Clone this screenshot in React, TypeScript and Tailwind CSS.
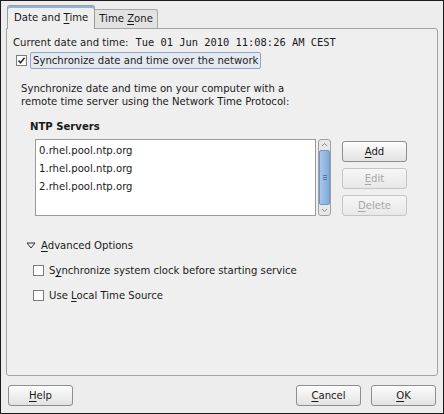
import { ReactNode } from "react";

const U = ({ children }: { children: ReactNode }) => (
  <span className="underline underline-offset-2">{children}</span>
);

const GtkButton = ({
  children,
  disabled = false,
  className = "",
}: {
  children: ReactNode;
  disabled?: boolean;
  className?: string;
}) => (
  <div
    className={`flex items-center justify-center h-[21px] w-[65px] rounded-[3px] border ${
      disabled
        ? "border-[#c4c4c4] text-[#a8a8a8] bg-gradient-to-b from-[#f6f6f6] to-[#e8e8e8]"
        : "border-[#8e8e8e] text-[#1a1a1a] bg-gradient-to-b from-[#fdfdfd] to-[#e2e2e2]"
    } ${className}`}
  >
    <span>{children}</span>
  </div>
);

const CheckBox = ({ checked = false }: { checked?: boolean }) => (
  <div className="w-[11px] h-[11px] border border-[#7c7c7c] bg-white flex items-center justify-center shrink-0">
    {checked && (
      <svg width="9" height="9" viewBox="0 0 9 9">
        <path d="M1.5 4.5 L3.5 6.8 L7.5 1.8" fill="none" stroke="#222" strokeWidth="1.4" />
      </svg>
    )}
  </div>
);

const servers = ["0.rhel.pool.ntp.org", "1.rhel.pool.ntp.org", "2.rhel.pool.ntp.org"];

export default function App() {
  return (
    <div
      className="w-[444px] h-[414px] bg-[#ededed] border border-[#1c1c1c] flex flex-col text-[10.1px] text-[#1a1a1a]"
      style={{ fontFamily: '"DejaVu Sans", sans-serif' }}
    >
      {/* tabs */}
      <div className="flex items-end pl-[6px] pt-[4px] h-[27px]">
        <div className="relative z-10 h-[24px] px-[6px] border border-b-0 border-[#9c9c9c] rounded-t-[3px] bg-[#efefef] flex items-center -mb-px shadow-[inset_0_2px_0_#8fb3dc]">
          <span>
            Date and <U>T</U>ime
          </span>
        </div>
        <div className="h-[19px] px-[4px] border border-b-0 border-l-0 border-[#a8a8a8] rounded-tr-[3px] bg-[#e2e2e2] flex items-center">
          <span>
            Time <U>Z</U>one
          </span>
        </div>
      </div>

      {/* notebook page */}
      <div className="mx-[5px] h-[348px] border border-[#a4a4a4] rounded-b-[3px] rounded-tr-[3px] bg-[#efefef] flex flex-col px-[6px]">
        <div className="flex items-center mt-[7px] h-[14px]">
          <span>Current date and time:</span>
          <span
            className="ml-[7px] text-[10.4px]"
            style={{ fontFamily: '"DejaVu Sans Mono", monospace' }}
          >
            Tue 01 Jun 2010 11:08:26 AM CEST
          </span>
        </div>

        <div className="flex items-center mt-[2px] ml-[3px] gap-[3px]">
          <CheckBox checked />
          <div className="border border-[#8fa6c4] rounded-[2px] bg-[#e4e9f0] px-[2px] h-[17px] flex items-center">
            <span>Synchronize date and time over the network</span>
          </div>
        </div>

        <div className="mt-[13px] ml-[8px] leading-[13px]">
          Synchronize date and time on your computer with a
          <br />
          remote time server using the Network Time Protocol:
        </div>

        <div className="mt-[11px] ml-[17px] font-bold">NTP Servers</div>

        <div className="flex mt-[5px] ml-[22px]">
          <div className="w-[281px] h-[77px] border border-[#9a9a9a] bg-white pt-[2px] pl-[3px] leading-[18px]">
            {servers.map((s) => (
              <div key={s}>{s}</div>
            ))}
          </div>
          <div className="ml-[2px] w-[13px] h-[77px] border border-[#a0a0a0] rounded-[3px] bg-[#e8e8e8] flex flex-col items-center">
            <svg width="9" height="10" viewBox="0 0 9 10" className="shrink-0">
              <path d="M2 6 L4.5 3.5 L7 6" fill="none" stroke="#8a8a8a" strokeWidth="1" />
            </svg>
            <div className="w-[11px] flex-1 bg-gradient-to-r from-[#a9c6ea] to-[#84aadb] border border-[#6f95c6] rounded-[2px] flex flex-col items-center justify-center gap-[1px]">
              <div className="w-[4px] h-px bg-[#5578a8]" />
              <div className="w-[4px] h-px bg-[#5578a8]" />
              <div className="w-[4px] h-px bg-[#5578a8]" />
            </div>
            <svg width="9" height="10" viewBox="0 0 9 10" className="shrink-0">
              <path d="M2 4 L4.5 6.5 L7 4" fill="none" stroke="#8a8a8a" strokeWidth="1" />
            </svg>
          </div>
          <div className="ml-[11px] mt-[2px] flex flex-col gap-[6px]">
            <GtkButton>
              <U>A</U>dd
            </GtkButton>
            <GtkButton disabled>
              <U>E</U>dit
            </GtkButton>
            <GtkButton disabled>
              <U>D</U>elete
            </GtkButton>
          </div>
        </div>

        <div className="flex items-center mt-[22px] ml-[13px] gap-[5px]">
          <svg width="10" height="8" viewBox="0 0 10 8">
            <path d="M1 1 L9 1 L5 6 Z" fill="none" stroke="#333" strokeWidth="1" />
          </svg>
          <span>
            <U>A</U>dvanced Options
          </span>
        </div>

        <div className="flex items-center mt-[10px] ml-[20px] gap-[5px]">
          <CheckBox />
          <span>
            S<U>y</U>nchronize system clock before starting service
          </span>
        </div>

        <div className="flex items-center mt-[10px] ml-[20px] gap-[5px]">
          <CheckBox />
          <span>
            Use <U>L</U>ocal Time Source
          </span>
        </div>
      </div>

      {/* bottom buttons */}
      <div className="flex items-center mt-[9px] px-[7px]">
        <GtkButton>
          <U>H</U>elp
        </GtkButton>
        <div className="flex-1" />
        <GtkButton>
          <U>C</U>ancel
        </GtkButton>
        <GtkButton className="ml-[10px]">
          <U>O</U>K
        </GtkButton>
      </div>
    </div>
  );
}
